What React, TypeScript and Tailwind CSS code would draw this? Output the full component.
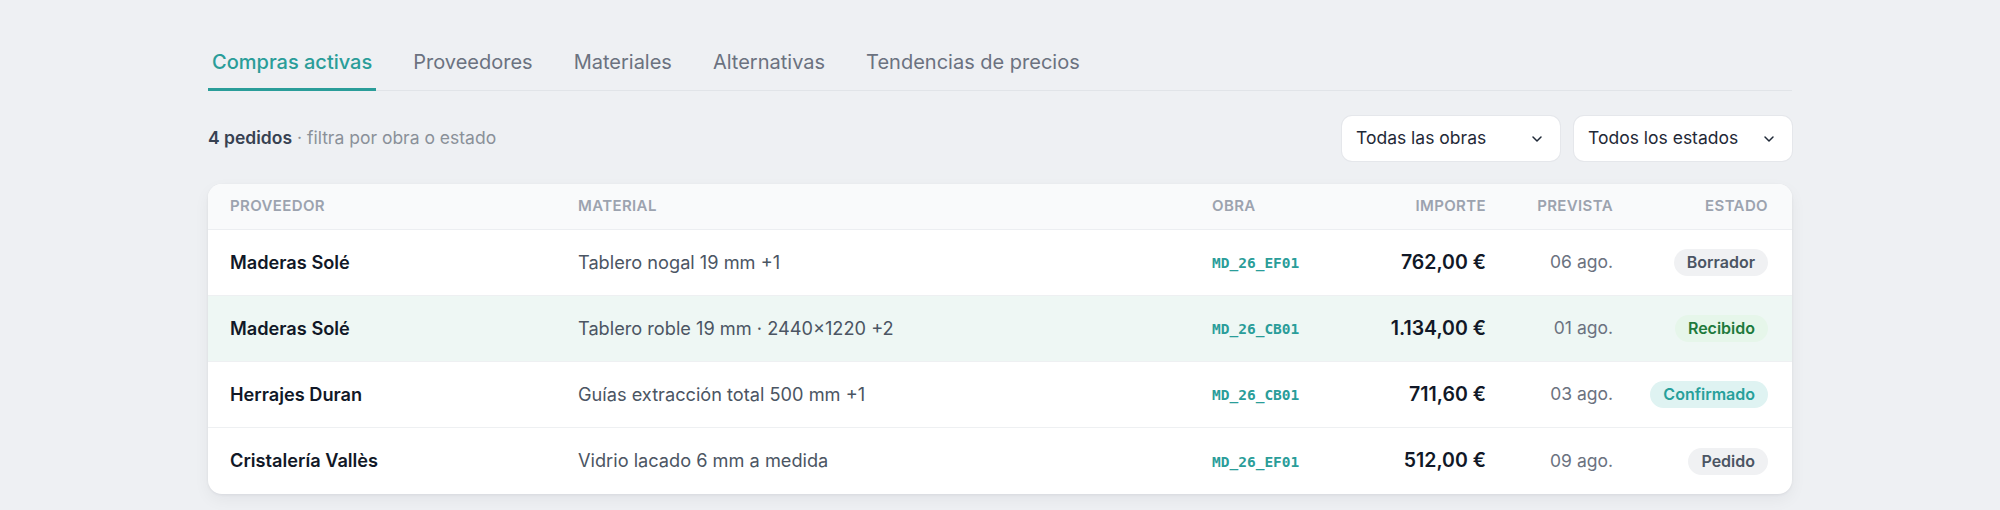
import React from "react";
import { ChevronDown } from "lucide-react";

const tabs = ["Compras activas", "Proveedores", "Materiales", "Alternativas", "Tendencias de precios"];

type Estado = "Borrador" | "Recibido" | "Confirmado" | "Pedido";

const pedidos: {
  proveedor: string;
  material: string;
  obra: string;
  importe: string;
  prevista: string;
  estado: Estado;
}[] = [
  { proveedor: "Maderas Solé", material: "Tablero nogal 19 mm +1", obra: "MD_26_EF01", importe: "762,00 €", prevista: "06 ago.", estado: "Borrador" },
  { proveedor: "Maderas Solé", material: "Tablero roble 19 mm · 2440×1220 +2", obra: "MD_26_CB01", importe: "1.134,00 €", prevista: "01 ago.", estado: "Recibido" },
  { proveedor: "Herrajes Duran", material: "Guías extracción total 500 mm +1", obra: "MD_26_CB01", importe: "711,60 €", prevista: "03 ago.", estado: "Confirmado" },
  { proveedor: "Cristalería Vallès", material: "Vidrio lacado 6 mm a medida", obra: "MD_26_EF01", importe: "512,00 €", prevista: "09 ago.", estado: "Pedido" },
];

const badgeStyles: Record<Estado, string> = {
  Borrador: "bg-[#f0f1f3] text-[#4b5563]",
  Recibido: "bg-[#e6f6ea] text-[#1e7a3c]",
  Confirmado: "bg-[#dff3f2] text-[#27a09b]",
  Pedido: "bg-[#f0f1f3] text-[#4b5563]",
};

const cols = "grid grid-cols-[348px_634px_144px_130px_127px_155px] px-[22px] items-center";

const Select = ({ label }: { label: string }) => (
  <button className="flex h-[45px] w-[218px] items-center justify-between rounded-[10px] bg-white pl-[14px] pr-[15px] text-[17.5px] text-[#1f2937] shadow-[0_0_0_1px_rgba(15,23,42,0.04)]">
    <span>{label}</span>
    <ChevronDown size={16} strokeWidth={2.25} className="text-[#1f2937]" />
  </button>
);

export default function App() {
  return (
    <div className="min-h-screen bg-[#eef0f3] font-['Inter',sans-serif] text-[#111827]">
      <div className="mx-auto w-[1584px] pt-[40px]">
        <div className="flex gap-[33px] border-b border-[#e1e4e8]">
          {tabs.map((t, i) => (
            <div
              key={t}
              className={
                i === 0
                  ? "-mb-px border-b-[3px] border-[#2a9d99] px-1 pt-2 pb-3 text-[20px] leading-7 font-medium text-[#2a9d99]"
                  : "-mb-px border-b-[3px] border-transparent px-1 pt-2 pb-3 text-[20px] leading-7 text-[#6b7280]"
              }
            >
              {t}
            </div>
          ))}
        </div>

        <div className="mt-[25px] flex items-center justify-between">
          <p className="text-[17.5px] text-[#8a9099]">
            <span className="font-semibold text-[#374151]">4 pedidos</span> · filtra por obra o estado
          </p>
          <div className="flex gap-[14px]">
            <Select label="Todas las obras" />
            <Select label="Todos los estados" />
          </div>
        </div>

        <div className="mt-[23px] overflow-hidden rounded-[14px] bg-white shadow-[0_1px_3px_rgba(15,23,42,0.06),0_6px_16px_rgba(15,23,42,0.05)]">
          <div className={`${cols} h-[46px] border-b border-[#eceef1] bg-[#f9fafb] text-[15px] font-semibold tracking-wide text-[#9ca3af] uppercase`}>
            <div>Proveedor</div>
            <div>Material</div>
            <div>Obra</div>
            <div className="text-right">Importe</div>
            <div className="text-right">Prevista</div>
            <div className="text-right">Estado</div>
          </div>
          {pedidos.map((p, i) => (
            <div
              key={i}
              className={`${cols} h-[66px] ${i < pedidos.length - 1 ? "border-b border-[#eef0f2]" : ""} ${i === 1 ? "bg-[#eef7f4]" : ""}`}
            >
              <div className="text-[18.2px] font-semibold text-[#111827]">{p.proveedor}</div>
              <div className="text-[18.2px] text-[#4b5563]">{p.material}</div>
              <div className="pt-[3px] font-['DejaVu_Sans_Mono',monospace] text-[14.5px] font-semibold text-[#2a9d99]">{p.obra}</div>
              <div className="text-right text-[19.5px] font-semibold text-[#111827]">{p.importe}</div>
              <div className="text-right text-[17.5px] text-[#6b7280]">{p.prevista}</div>
              <div className="flex justify-end">
                <span className={`rounded-full px-[13px] py-[3px] text-[16px] leading-[21px] font-semibold ${badgeStyles[p.estado]}`}>{p.estado}</span>
              </div>
            </div>
          ))}
        </div>
      </div>
    </div>
  );
}
